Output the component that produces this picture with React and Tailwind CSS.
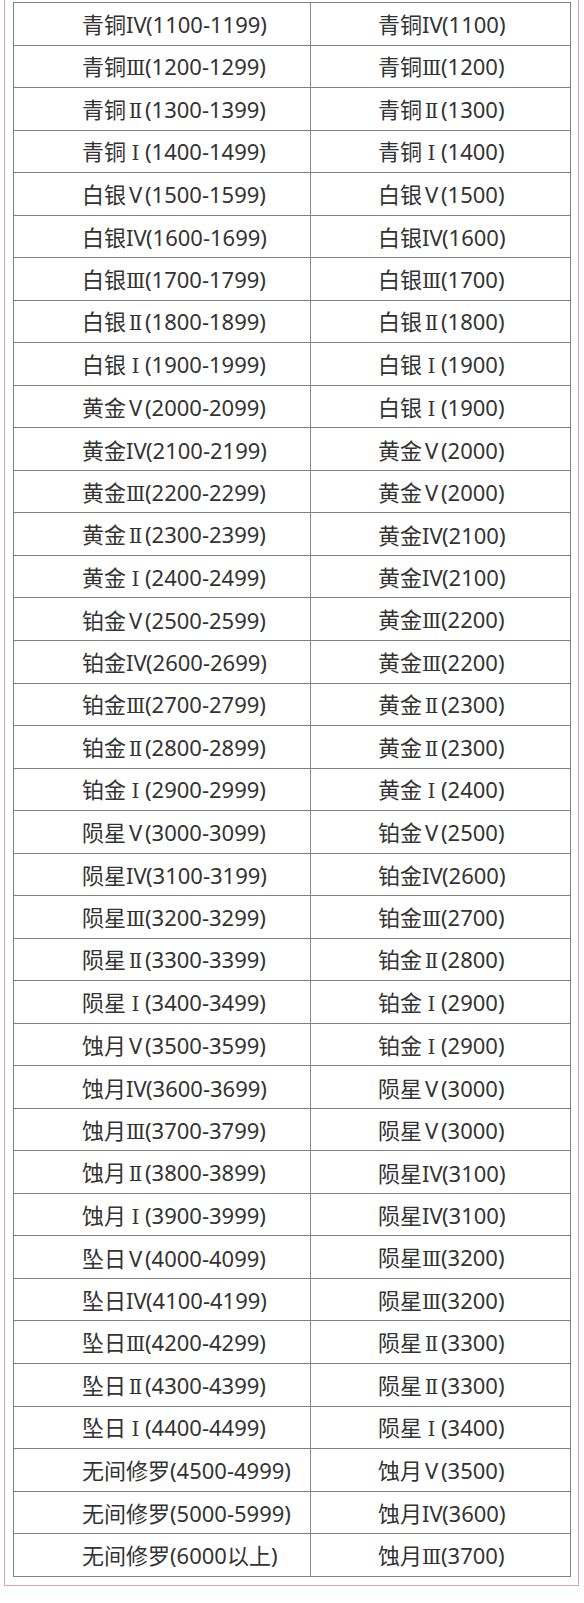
const left = [
  ["青铜", "IV", "(1100-1199)"],
  ["青铜", "Ⅲ", "(1200-1299)"],
  ["青铜", "Ⅱ", "(1300-1399)"],
  ["青铜", "Ⅰ", "(1400-1499)"],
  ["白银", "Ⅴ", "(1500-1599)"],
  ["白银", "IV", "(1600-1699)"],
  ["白银", "Ⅲ", "(1700-1799)"],
  ["白银", "Ⅱ", "(1800-1899)"],
  ["白银", "Ⅰ", "(1900-1999)"],
  ["黄金", "Ⅴ", "(2000-2099)"],
  ["黄金", "IV", "(2100-2199)"],
  ["黄金", "Ⅲ", "(2200-2299)"],
  ["黄金", "Ⅱ", "(2300-2399)"],
  ["黄金", "Ⅰ", "(2400-2499)"],
  ["铂金", "Ⅴ", "(2500-2599)"],
  ["铂金", "IV", "(2600-2699)"],
  ["铂金", "Ⅲ", "(2700-2799)"],
  ["铂金", "Ⅱ", "(2800-2899)"],
  ["铂金", "Ⅰ", "(2900-2999)"],
  ["陨星", "Ⅴ", "(3000-3099)"],
  ["陨星", "IV", "(3100-3199)"],
  ["陨星", "Ⅲ", "(3200-3299)"],
  ["陨星", "Ⅱ", "(3300-3399)"],
  ["陨星", "Ⅰ", "(3400-3499)"],
  ["蚀月", "Ⅴ", "(3500-3599)"],
  ["蚀月", "IV", "(3600-3699)"],
  ["蚀月", "Ⅲ", "(3700-3799)"],
  ["蚀月", "Ⅱ", "(3800-3899)"],
  ["蚀月", "Ⅰ", "(3900-3999)"],
  ["坠日", "Ⅴ", "(4000-4099)"],
  ["坠日", "IV", "(4100-4199)"],
  ["坠日", "Ⅲ", "(4200-4299)"],
  ["坠日", "Ⅱ", "(4300-4399)"],
  ["坠日", "Ⅰ", "(4400-4499)"],
  ["无间修罗", "", "(4500-4999)"],
  ["无间修罗", "", "(5000-5999)"],
  ["无间修罗", "", "(6000以上)"],
];

const right = [
  ["青铜", "IV", "(1100)"],
  ["青铜", "Ⅲ", "(1200)"],
  ["青铜", "Ⅱ", "(1300)"],
  ["青铜", "Ⅰ", "(1400)"],
  ["白银", "Ⅴ", "(1500)"],
  ["白银", "IV", "(1600)"],
  ["白银", "Ⅲ", "(1700)"],
  ["白银", "Ⅱ", "(1800)"],
  ["白银", "Ⅰ", "(1900)"],
  ["白银", "Ⅰ", "(1900)"],
  ["黄金", "Ⅴ", "(2000)"],
  ["黄金", "Ⅴ", "(2000)"],
  ["黄金", "IV", "(2100)"],
  ["黄金", "IV", "(2100)"],
  ["黄金", "Ⅲ", "(2200)"],
  ["黄金", "Ⅲ", "(2200)"],
  ["黄金", "Ⅱ", "(2300)"],
  ["黄金", "Ⅱ", "(2300)"],
  ["黄金", "Ⅰ", "(2400)"],
  ["铂金", "Ⅴ", "(2500)"],
  ["铂金", "IV", "(2600)"],
  ["铂金", "Ⅲ", "(2700)"],
  ["铂金", "Ⅱ", "(2800)"],
  ["铂金", "Ⅰ", "(2900)"],
  ["铂金", "Ⅰ", "(2900)"],
  ["陨星", "Ⅴ", "(3000)"],
  ["陨星", "Ⅴ", "(3000)"],
  ["陨星", "IV", "(3100)"],
  ["陨星", "IV", "(3100)"],
  ["陨星", "Ⅲ", "(3200)"],
  ["陨星", "Ⅲ", "(3200)"],
  ["陨星", "Ⅱ", "(3300)"],
  ["陨星", "Ⅱ", "(3300)"],
  ["陨星", "Ⅰ", "(3400)"],
  ["蚀月", "Ⅴ", "(3500)"],
  ["蚀月", "IV", "(3600)"],
  ["蚀月", "Ⅲ", "(3700)"],
];

function Num({ num }) {
  if (!num) return null;
  if (num === "IV") {
    return (
      <span className="inline-block w-[20px] text-center font-['Noto_Sans',sans-serif]">
        {num}
      </span>
    );
  }
  if (num === "Ⅴ") {
    return (
      <span className="inline-block w-[19px] text-center font-['Noto_Sans',sans-serif]">
        V
      </span>
    );
  }
  return (
    <span className="inline-block w-[19px] text-center font-['DejaVu_Serif','Noto_Sans_CJK_SC',serif] text-[20px]">
      {num}
    </span>
  );
}

function Label({ parts }) {
  const [name, num, rest] = parts;
  return (
    <span className="whitespace-nowrap">
      <span className="font-['Noto_Sans_CJK_SC',sans-serif]">{name}</span>
      <Num num={num} />
      <span className="font-['Noto_Sans','Noto_Sans_CJK_SC',sans-serif]">{rest}</span>
    </span>
  );
}

export default function App() {
  return (
    <div className="w-[584px] h-[1603px] bg-white overflow-hidden">
      <div className="ml-[4px] w-[575px] border-l border-r border-b border-[#e6a3a3] pt-[2px] pb-[8px] pl-[8px] pr-[7px]">
        <div className="w-[558px] border-t border-l border-r border-[#808080] text-[22px] leading-none text-[#333333]">
          {left.map((l, i) => (
            <div key={i} className="flex h-[42.54px] border-b border-[#808080]">
              <div className="w-[297px] shrink-0 border-r border-[#8a8a8a] flex items-center pl-[68px]">
                <Label parts={l} />
              </div>
              <div className="flex-1 flex items-center pl-[67px]">
                <Label parts={right[i]} />
              </div>
            </div>
          ))}
        </div>
      </div>
    </div>
  );
}
